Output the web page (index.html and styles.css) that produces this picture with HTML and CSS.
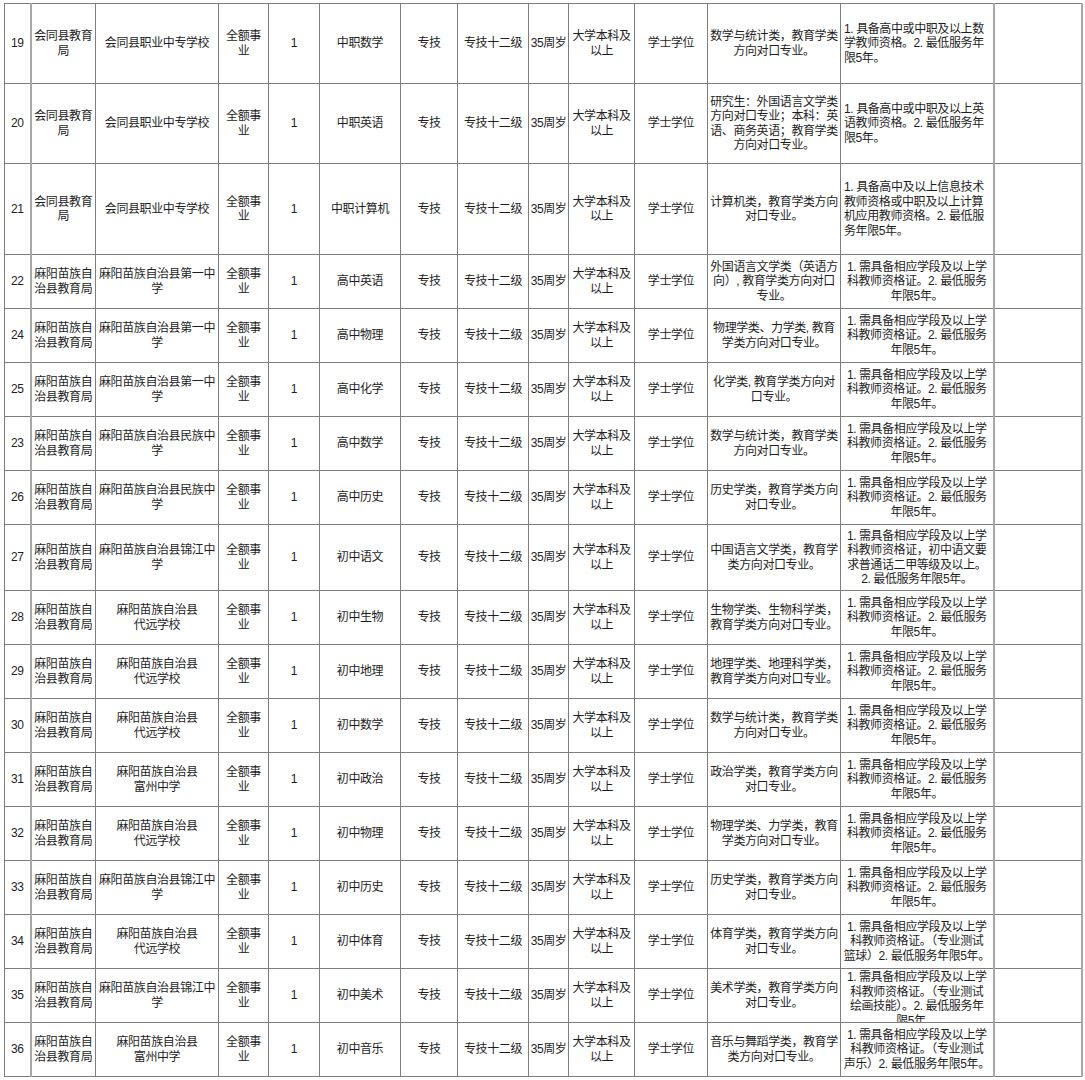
FILE: index.html
```html
<!DOCTYPE html>
<html lang="zh-CN">
<head>
<meta charset="utf-8">
<title>招聘岗位表</title>
<link rel="stylesheet" href="styles.css">
</head>
<body>
<div class="sheet">
<table class="grid">
<colgroup>
<col class="c-no"><col class="c-dept"><col class="c-unit"><col class="c-kind"><col class="c-num"><col class="c-post"><col class="c-type"><col class="c-level"><col class="c-age"><col class="c-edu"><col class="c-deg"><col class="c-major"><col class="c-cond"><col class="c-note">
</colgroup>
<tbody>
<tr class="r80">
<td>19</td><td class="dept">会同县教育<br>局</td><td>会同县职业中专学校</td><td>全额事<br>业</td><td>1</td><td>中职数学</td><td>专技</td><td>专技十二级</td><td>35周岁</td><td>大学本科及<br>以上</td><td>学士学位</td><td>数学与统计类，教育学类<br>方向对口专业。</td><td class="cond left">1. 具备高中或中职及以上数<br>学教师资格。2. 最低服务年<br>限5年。</td><td class="note"></td>
</tr>
<tr class="r80">
<td>20</td><td class="dept">会同县教育<br>局</td><td>会同县职业中专学校</td><td>全额事<br>业</td><td>1</td><td>中职英语</td><td>专技</td><td>专技十二级</td><td>35周岁</td><td>大学本科及<br>以上</td><td>学士学位</td><td>研究生：外国语言文学类<br>方向对口专业；本科：英<br>语、商务英语；教育学类<br>方向对口专业。</td><td class="cond left">1. 具备高中或中职及以上英<br>语教师资格。2. 最低服务年<br>限5年。</td><td class="note"></td>
</tr>
<tr class="r91">
<td>21</td><td class="dept">会同县教育<br>局</td><td>会同县职业中专学校</td><td>全额事<br>业</td><td>1</td><td>中职计算机</td><td>专技</td><td>专技十二级</td><td>35周岁</td><td>大学本科及<br>以上</td><td>学士学位</td><td>计算机类，教育学类方向<br>对口专业。</td><td class="cond left">1. 具备高中及以上信息技术<br>教师资格或中职及以上计算<br>机应用教师资格。2. 最低服<br>务年限5年。</td><td class="note"></td>
</tr>
<tr class="r54">
<td>22</td><td class="dept">麻阳苗族自<br>治县教育局</td><td>麻阳苗族自治县第一中<br>学</td><td>全额事<br>业</td><td>1</td><td>高中英语</td><td>专技</td><td>专技十二级</td><td>35周岁</td><td>大学本科及<br>以上</td><td>学士学位</td><td>外国语言文学类（英语方<br>向）, 教育学类方向对口<br>专业。</td><td class="cond">1. 需具备相应学段及以上学<br>科教师资格证。2. 最低服务<br>年限5年。</td><td class="note"></td>
</tr>
<tr class="r54">
<td>24</td><td class="dept">麻阳苗族自<br>治县教育局</td><td>麻阳苗族自治县第一中<br>学</td><td>全额事<br>业</td><td>1</td><td>高中物理</td><td>专技</td><td>专技十二级</td><td>35周岁</td><td>大学本科及<br>以上</td><td>学士学位</td><td>物理学类、力学类, 教育<br>学类方向对口专业。</td><td class="cond">1. 需具备相应学段及以上学<br>科教师资格证。2. 最低服务<br>年限5年。</td><td class="note"></td>
</tr>
<tr class="r54">
<td>25</td><td class="dept">麻阳苗族自<br>治县教育局</td><td>麻阳苗族自治县第一中<br>学</td><td>全额事<br>业</td><td>1</td><td>高中化学</td><td>专技</td><td>专技十二级</td><td>35周岁</td><td>大学本科及<br>以上</td><td>学士学位</td><td>化学类, 教育学类方向对<br>口专业。</td><td class="cond">1. 需具备相应学段及以上学<br>科教师资格证。2. 最低服务<br>年限5年。</td><td class="note"></td>
</tr>
<tr class="r54">
<td>23</td><td class="dept">麻阳苗族自<br>治县教育局</td><td>麻阳苗族自治县民族中<br>学</td><td>全额事<br>业</td><td>1</td><td>高中数学</td><td>专技</td><td>专技十二级</td><td>35周岁</td><td>大学本科及<br>以上</td><td>学士学位</td><td>数学与统计类，教育学类<br>方向对口专业。</td><td class="cond">1. 需具备相应学段及以上学<br>科教师资格证。2. 最低服务<br>年限5年。</td><td class="note"></td>
</tr>
<tr class="r54">
<td>26</td><td class="dept">麻阳苗族自<br>治县教育局</td><td>麻阳苗族自治县民族中<br>学</td><td>全额事<br>业</td><td>1</td><td>高中历史</td><td>专技</td><td>专技十二级</td><td>35周岁</td><td>大学本科及<br>以上</td><td>学士学位</td><td>历史学类，教育学类方向<br>对口专业。</td><td class="cond">1. 需具备相应学段及以上学<br>科教师资格证。2. 最低服务<br>年限5年。</td><td class="note"></td>
</tr>
<tr class="r66">
<td>27</td><td class="dept">麻阳苗族自<br>治县教育局</td><td>麻阳苗族自治县锦江中<br>学</td><td>全额事<br>业</td><td>1</td><td>初中语文</td><td>专技</td><td>专技十二级</td><td>35周岁</td><td>大学本科及<br>以上</td><td>学士学位</td><td>中国语言文学类，教育学<br>类方向对口专业。</td><td class="cond">1. 需具备相应学段及以上学<br>科教师资格证，初中语文要<br>求普通话二甲等级及以上。<br>2. 最低服务年限5年。</td><td class="note"></td>
</tr>
<tr class="r54">
<td>28</td><td class="dept">麻阳苗族自<br>治县教育局</td><td>麻阳苗族自治县<br>代远学校</td><td>全额事<br>业</td><td>1</td><td>初中生物</td><td>专技</td><td>专技十二级</td><td>35周岁</td><td>大学本科及<br>以上</td><td>学士学位</td><td>生物学类、生物科学类，<br>教育学类方向对口专业。</td><td class="cond">1. 需具备相应学段及以上学<br>科教师资格证。2. 最低服务<br>年限5年。</td><td class="note"></td>
</tr>
<tr class="r54">
<td>29</td><td class="dept">麻阳苗族自<br>治县教育局</td><td>麻阳苗族自治县<br>代远学校</td><td>全额事<br>业</td><td>1</td><td>初中地理</td><td>专技</td><td>专技十二级</td><td>35周岁</td><td>大学本科及<br>以上</td><td>学士学位</td><td>地理学类、地理科学类，<br>教育学类方向对口专业。</td><td class="cond">1. 需具备相应学段及以上学<br>科教师资格证。2. 最低服务<br>年限5年。</td><td class="note"></td>
</tr>
<tr class="r54">
<td>30</td><td class="dept">麻阳苗族自<br>治县教育局</td><td>麻阳苗族自治县<br>代远学校</td><td>全额事<br>业</td><td>1</td><td>初中数学</td><td>专技</td><td>专技十二级</td><td>35周岁</td><td>大学本科及<br>以上</td><td>学士学位</td><td>数学与统计类，教育学类<br>方向对口专业。</td><td class="cond">1. 需具备相应学段及以上学<br>科教师资格证。2. 最低服务<br>年限5年。</td><td class="note"></td>
</tr>
<tr class="r54">
<td>31</td><td class="dept">麻阳苗族自<br>治县教育局</td><td>麻阳苗族自治县<br>富州中学</td><td>全额事<br>业</td><td>1</td><td>初中政治</td><td>专技</td><td>专技十二级</td><td>35周岁</td><td>大学本科及<br>以上</td><td>学士学位</td><td>政治学类，教育学类方向<br>对口专业。</td><td class="cond">1. 需具备相应学段及以上学<br>科教师资格证。2. 最低服务<br>年限5年。</td><td class="note"></td>
</tr>
<tr class="r54">
<td>32</td><td class="dept">麻阳苗族自<br>治县教育局</td><td>麻阳苗族自治县<br>代远学校</td><td>全额事<br>业</td><td>1</td><td>初中物理</td><td>专技</td><td>专技十二级</td><td>35周岁</td><td>大学本科及<br>以上</td><td>学士学位</td><td>物理学类、力学类，教育<br>学类方向对口专业。</td><td class="cond">1. 需具备相应学段及以上学<br>科教师资格证。2. 最低服务<br>年限5年。</td><td class="note"></td>
</tr>
<tr class="r54">
<td>33</td><td class="dept">麻阳苗族自<br>治县教育局</td><td>麻阳苗族自治县锦江中<br>学</td><td>全额事<br>业</td><td>1</td><td>初中历史</td><td>专技</td><td>专技十二级</td><td>35周岁</td><td>大学本科及<br>以上</td><td>学士学位</td><td>历史学类，教育学类方向<br>对口专业。</td><td class="cond">1. 需具备相应学段及以上学<br>科教师资格证。2. 最低服务<br>年限5年。</td><td class="note"></td>
</tr>
<tr class="r54">
<td>34</td><td class="dept">麻阳苗族自<br>治县教育局</td><td>麻阳苗族自治县<br>代远学校</td><td>全额事<br>业</td><td>1</td><td>初中体育</td><td>专技</td><td>专技十二级</td><td>35周岁</td><td>大学本科及<br>以上</td><td>学士学位</td><td>体育学类，教育学类方向<br>对口专业。</td><td class="cond">1. 需具备相应学段及以上学<br>科教师资格证。（专业测试<br>篮球）2. 最低服务年限5年。</td><td class="note"></td>
</tr>
<tr class="r54">
<td>35</td><td class="dept">麻阳苗族自<br>治县教育局</td><td>麻阳苗族自治县锦江中<br>学</td><td>全额事<br>业</td><td>1</td><td>初中美术</td><td>专技</td><td>专技十二级</td><td>35周岁</td><td>大学本科及<br>以上</td><td>学士学位</td><td>美术学类，教育学类方向<br>对口专业。</td><td class="cond"><div class="clip">1. 需具备相应学段及以上学<br>科教师资格证。（专业测试<br>绘画技能）。2. 最低服务年<br>限5年。</div></td><td class="note"></td>
</tr>
<tr class="r54">
<td>36</td><td class="dept">麻阳苗族自<br>治县教育局</td><td>麻阳苗族自治县<br>富州中学</td><td>全额事<br>业</td><td>1</td><td>初中音乐</td><td>专技</td><td>专技十二级</td><td>35周岁</td><td>大学本科及<br>以上</td><td>学士学位</td><td>音乐与舞蹈学类，教育学<br>类方向对口专业。</td><td class="cond">1. 需具备相应学段及以上学<br>科教师资格证。（专业测试<br>声乐）2. 最低服务年限5年。</td><td class="note"></td>
</tr>
</tbody>
</table>
</div>
</body>
</html>
```

FILE: styles.css
```css
html, body {
  margin: 0;
  padding: 0;
  background: #ffffff;
}

.sheet {
  padding: 3px 0 0 4px;
}

.grid {
  border-collapse: collapse;
  table-layout: fixed;
  width: 1078px;
  font-family: "Liberation Sans", "Noto Sans CJK SC", sans-serif;
  font-size: 12px;
  letter-spacing: -0.4px;
  line-height: 14.5px;
  color: #1e1e1e;
}

.c-no { width: 26px; }
.c-dept { width: 65px; }
.c-unit { width: 123px; }
.c-kind { width: 50px; }
.c-num { width: 51px; }
.c-post { width: 81px; }
.c-type { width: 57px; }
.c-level { width: 71px; }
.c-age { width: 40px; }
.c-edu { width: 66px; }
.c-deg { width: 73px; }
.c-major { width: 133px; }
.c-cond { width: 153px; }
.c-note { width: 88px; }

.grid td {
  border: 1px solid #7d7d7d;
  padding: 0 1px;
  text-align: center;
  vertical-align: middle;
  white-space: nowrap;
  overflow: hidden;
}

.grid td.dept {
  border-left: 2px solid #a8a8a8;
}

.grid td.note {
  border-left: 2px solid #a8a8a8;
  border-right: 2px solid #a8a8a8;
}

.grid td.left {
  text-align: left;
  padding-left: 3px;
}

.r80 { height: 80px; }
.r91 { height: 91px; }
.r66 { height: 66px; }
.r54 { height: 54px; }

.clip {
  height: 53px;
  overflow: hidden;
  padding-top: 1px;
  box-sizing: border-box;
}
```
